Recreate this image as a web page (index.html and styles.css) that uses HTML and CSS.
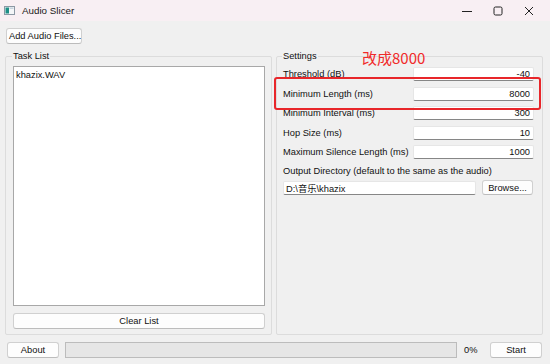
FILE: index.html
```html
<!DOCTYPE html>
<html lang="en">
<head>
    <meta charset="UTF-8">
    <title>Audio Slicer</title>
    <link rel="stylesheet" href="styles.css">
</head>
<body>
    <div class="window">
        <div class="titlebar">
            <svg class="app-icon" width="11" height="9" viewBox="0 0 11 9">
                <rect x="0.5" y="0.5" width="10" height="8" fill="#f4f6f8" stroke="#8c98a4"/>
                <rect x="1.5" y="1.5" width="3.5" height="6" fill="#1f8f86"/>
                <rect x="5.5" y="1.5" width="4" height="1.5" fill="#c7d3de"/>
            </svg>
            <span class="title">Audio Slicer</span>
            <div class="controls">
                <svg width="10" height="10" viewBox="0 0 10 10"><path d="M0 5.5h10" stroke="#222" stroke-width="1"/></svg>
                <svg width="10" height="10" viewBox="0 0 10 10"><rect x="1" y="1" width="8" height="8" rx="1.5" fill="none" stroke="#222" stroke-width="1"/></svg>
                <svg width="10" height="10" viewBox="0 0 10 10"><path d="M1 1l8 8M9 1l-8 8" stroke="#222" stroke-width="1"/></svg>
            </div>
        </div>

        <div class="content">
            <div class="toolbar">
                <button class="btn add-btn">Add Audio Files...</button>
            </div>

            <div class="panes">
                <fieldset class="group tasks">
                    <legend>Task List</legend>
                    <div class="list">
                        <div class="list-item">khazix.WAV</div>
                    </div>
                    <button class="btn clear-btn">Clear List</button>
                </fieldset>

                <fieldset class="group settings">
                    <legend>Settings</legend>
                    <div class="form">
                        <label>Threshold (dB)</label><input type="text" value="-40">
                        <label>Minimum Length (ms)</label><input type="text" value="8000">
                        <label>Minimum Interval (ms)</label><input type="text" value="300">
                        <label>Hop Size (ms)</label><input type="text" value="10">
                        <label>Maximum Silence Length (ms)</label><input type="text" value="1000">
                    </div>
                    <div class="dir-label">Output Directory (default to the same as the audio)</div>
                    <div class="dir-row">
                        <input type="text" class="dir-input" value="D:\音乐\khazix">
                        <button class="btn browse-btn">Browse...</button>
                    </div>
                </fieldset>
            </div>

            <div class="statusbar">
                <button class="btn about-btn">About</button>
                <div class="progress"></div>
                <span class="percent">0%</span>
                <button class="btn start-btn">Start</button>
            </div>
        </div>

        <!-- annotation drawn on top of the screenshot -->
        <div class="note">改成8000</div>
        <div class="highlight"></div>
    </div>
</body>
</html>
```

FILE: styles.css
```css
body {
    margin: 0;
    background-color: #f0f0f0;
    font-family: 'Liberation Sans', Arial, 'Noto Sans CJK SC', sans-serif;
    font-size: 9.3px;
    color: #111;
}
.window {
    position: relative;
    width: 550px;
    height: 364px;
    overflow: hidden;
}
.titlebar {
    height: 21px;
    background-color: #f8eff3;
    display: flex;
    align-items: center;
    padding-left: 4px;
}
.app-icon {
    margin-right: 7px;
}
.title {
    font-size: 9.8px;
    color: #1a1a1a;
}
.controls {
    margin-left: auto;
    display: flex;
    gap: 21px;
    padding-right: 16px;
}
.content {
    padding: 0 7px 0 5px;
}
.toolbar {
    padding: 7px 0 0 1px;
    height: 21px;
}
.btn {
    font-family: inherit;
    font-size: 9.3px;
    color: #111;
    background-color: #fdfdfd;
    border: 1px solid #d0d0d0;
    border-bottom-color: #bcbcbc;
    border-radius: 3px;
    height: 16px;
    padding: 0 2px;
    line-height: 14px;
    white-space: nowrap;
}
.add-btn {
    width: 76px;
}
.panes {
    display: grid;
    grid-template-columns: 267px 267px;
    gap: 4px;
    height: 286px;
}
.group {
    margin: 0;
    border: 1px solid #dcdcdc;
    border-radius: 2px;
    min-width: 0;
    box-sizing: border-box;
    height: 286px;
}
.group legend {
    padding: 0 1px;
    line-height: 14px;
    height: 14px;
}
.tasks {
    padding: 3px 6px 5px 7px;
    display: flex;
    flex-direction: column;
    gap: 7px;
}
.tasks legend {
    margin-left: -1px;
}
.settings legend {
    margin-left: -1px;
}
.list {
    flex: 1;
    background-color: #fff;
    border: 1px solid #a8a8a8;
    padding: 3px 2px;
}
.list-item {
    line-height: 11px;
}
.clear-btn {
    width: 100%;
}
.settings {
    padding: 4px 8px 0 6px;
}
.form {
    display: grid;
    grid-template-columns: 1fr 121px;
    row-gap: 5.5px;
    align-items: center;
}
input {
    font-family: inherit;
    font-size: 9.3px;
    color: #111;
    height: 14px;
    box-sizing: border-box;
    border: 1px solid #e6e6e6;
    border-bottom-color: #868686;
    background-color: #fff;
    border-radius: 2px;
    padding: 0 3px;
    outline: none;
}
.form input {
    width: 121px;
    text-align: right;
}
.dir-label {
    margin-top: 5px;
    height: 14px;
    line-height: 14px;
}
.dir-row {
    display: flex;
    gap: 6px;
    margin-top: 2px;
    align-items: center;
}
.dir-input {
    width: 193px;
    text-align: left;
    padding-left: 2px;
}
.browse-btn {
    width: 51px;
    height: 15px;
}
.statusbar {
    display: flex;
    align-items: center;
    margin-top: 6px;
    height: 17px;
}
.about-btn {
    width: 52px;
    margin-left: 2px;
}
.progress {
    margin-left: 6px;
    width: 392px;
    height: 16px;
    box-sizing: border-box;
    background-color: #e6e6e6;
    border: 1px solid #bcbcbc;
}
.percent {
    margin-left: 7px;
    width: 26px;
}
.start-btn {
    width: 52px;
}
.note {
    position: absolute;
    left: 362px;
    top: 48px;
    color: #f02a2a;
    font-family: 'Noto Sans CJK SC', 'Liberation Sans', sans-serif;
    font-size: 15px;
    line-height: 20px;
}
.highlight {
    position: absolute;
    left: 274px;
    top: 77px;
    width: 263px;
    height: 29px;
    border: 2px solid #e8262a;
    border-radius: 3px;
}
```
